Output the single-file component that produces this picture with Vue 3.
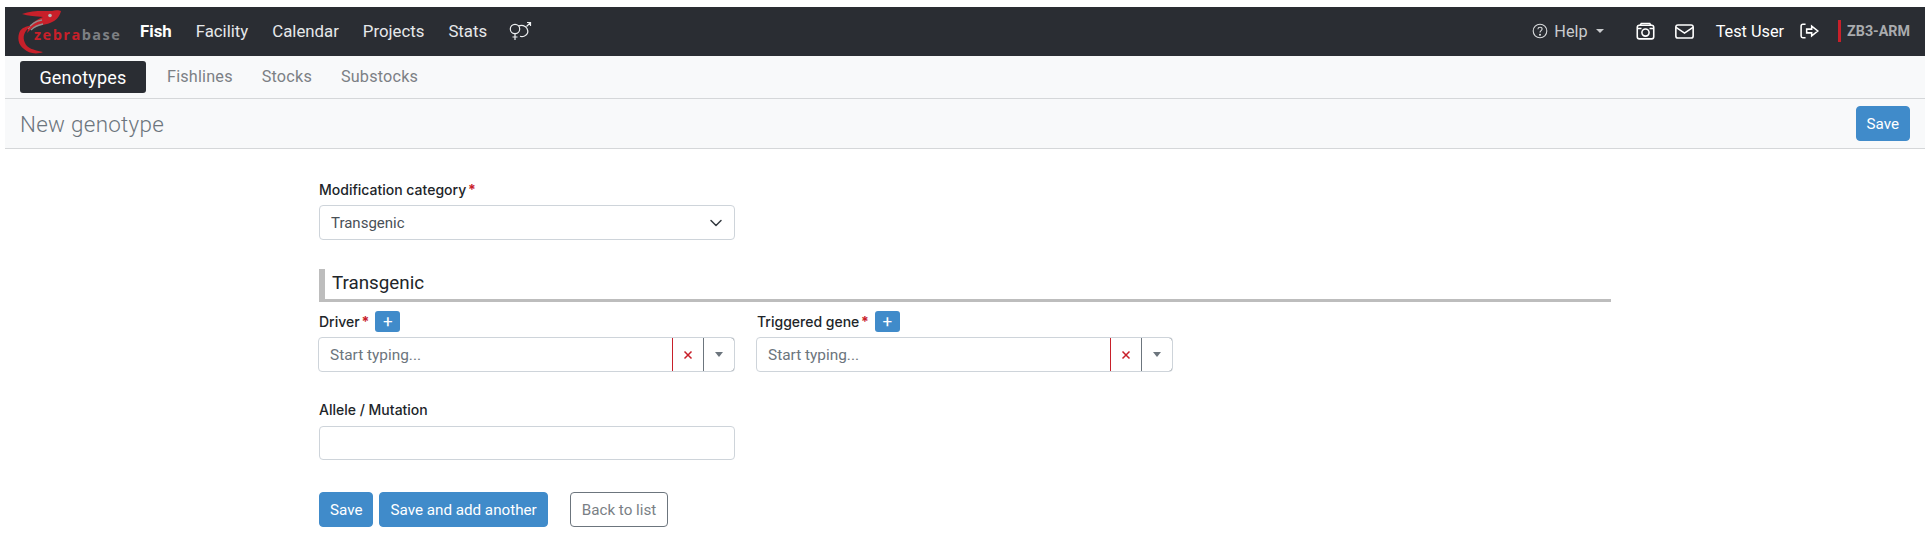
<script setup>
const navItems = ['Facility', 'Calendar', 'Projects', 'Stats']
const tabs = ['Fishlines', 'Stocks', 'Substocks']
const pickers = [
  { label: 'Driver' },
  { label: 'Triggered gene' }
]
</script>

<template>
  <div class="page">
    <header class="navbar">
      <div class="brand">
        <svg class="fish" viewBox="0 0 56 49" width="56" height="49">
          <path d="M8 7C18 3 30 4 38 4c3-1 7-1 9 0-1 5-5 10-11 12-5 2-13 2-18 5l-5 5c2-8 8-13 16-16C22 9 14 9 8 7Z" fill="#c8202a"/>
          <circle cx="36" cy="8.500" r="1.800" fill="#b9b9b9"/>
          <path d="M14 22c3-5 8-8 14-9M17 23c3-3 7-5 12-6" fill="none" stroke="#8f8f8f" stroke-width="1.300"/>
          <path d="M17 19c-7 5-9 11-6 17 2 5 8 7 18 9-7 3-15 1-19-3-6-4-7-12-4-18 2-3 6-5 11-5Z" fill="#c8202a"/>
        </svg>
        <span class="brand-text"><span class="zebra">zebra</span><span class="base">base</span></span>
      </div>
      <nav class="mainnav">
        <a class="nav-link active">Fish</a>
        <a v-for="item in navItems" :key="item" class="nav-link">{{ item }}</a>
        <svg class="gender" viewBox="6 6 23 20" width="23" height="20" fill="none" stroke="#eceef0" stroke-width="1.200">
          <circle cx="12" cy="14" r="4.700"/>
          <path d="M12 18.700V25M9.500 22h5"/>
          <path d="M15.500 11c3-1.500 7-.5 8.500 2.500s.5 6-2.500 7.500c-1.500.7-3 .8-4.500.3"/>
          <path d="M23.500 11.500L27 8M24 7.500h3.500V11"/>
        </svg>
      </nav>
      <div class="usernav">
        <span class="help">
          <svg viewBox="0 0 16 16" width="16" height="16" fill="none" stroke="#d8dadc" stroke-width="1.100">
            <circle cx="8" cy="8" r="6.800"/>
            <path d="M5.900 6.200C6 4.900 6.900 4.300 8 4.300c1.200 0 2.100.8 2.100 1.800 0 1.500-2.100 1.600-2.100 3.300"/>
            <circle cx="8" cy="11.700" r=".5" fill="#d8dadc"/>
          </svg>
          <span>Help</span>
          <i class="help-caret"></i>
        </span>
        <svg class="cam" viewBox="0 0 18 18" width="19" height="19" fill="none" stroke="#fff" stroke-width="1.500">
          <rect x="1.200" y="3" width="15.600" height="13" rx="2"/>
          <circle cx="9" cy="10" r="3.400"/>
          <path d="M1.200 6.200h4M12.800 6.200h4M4 3l1-1.600h8L14 3"/>
        </svg>
        <svg class="mail" viewBox="0 0 18 14" width="19" height="15" fill="none" stroke="#fff" stroke-width="1.500">
          <rect x=".8" y=".8" width="16.400" height="12.400" rx="2"/>
          <path d="M1 3l8 5.500L17 3"/>
        </svg>
        <span class="user">Test User</span>
        <svg class="logout" viewBox="0 0 18 14" width="20" height="16" fill="none" stroke="#fff" stroke-width="1.400">
          <path d="M5 1H2.500C1.600 1 1 1.600 1 2.500v9c0 .9.600 1.500 1.500 1.500H5"/>
          <path d="M6 5.300h4.500V2.600L16 7l-5.500 4.400V8.700H6z"/>
        </svg>
        <span class="server">ZB3-ARM</span>
      </div>
    </header>

    <div class="subnav">
      <a class="tab active">Genotypes</a>
      <a v-for="tab in tabs" :key="tab" class="tab">{{ tab }}</a>
    </div>

    <div class="titlebar">
      <h1>New genotype</h1>
      <button class="btn">Save</button>
    </div>

    <main class="form">
      <section class="half">
        <label class="lbl">Modification category <b>*</b></label>
        <div class="control select">
          <span>Transgenic</span>
          <svg viewBox="0 0 16 16" width="16" height="16" fill="none" stroke="#343a40" stroke-width="1.500" stroke-linecap="round" stroke-linejoin="round">
            <path d="M3 5.500l5 5 5-5"/>
          </svg>
        </div>
      </section>

      <h2 class="section">Transgenic</h2>

      <section class="pickers">
        <div v-for="p in pickers" :key="p.label" class="picker">
          <div class="lbl-row">
            <label class="lbl">{{ p.label }} <b>*</b></label>
            <button class="add">+</button>
          </div>
          <div class="combo">
            <span class="placeholder">Start typing...</span>
            <span class="clear">
              <svg viewBox="0 0 10 10" width="10" height="10" fill="none" stroke="#c8202a" stroke-width="1.500"><path d="M1.500 1.500l7 7M8.500 1.500l-7 7"/></svg>
            </span>
            <span class="drop"><i></i></span>
          </div>
        </div>
      </section>

      <section class="half allele">
        <label class="lbl">Allele / Mutation</label>
        <div class="control"></div>
      </section>

      <div class="actions">
        <button class="btn">Save</button>
        <button class="btn">Save and add another</button>
        <button class="btn outline">Back to list</button>
      </div>
    </main>
  </div>
</template>

<style>
html, body { margin: 0; background: #fff; }
</style>

<style scoped>
.page {
  padding: 7px 5px 0 5px;
  font-family: Inter, Roboto, "Liberation Sans", sans-serif;
  font-size: 14px;
  color: #212529;
  height: 543px;
  overflow: hidden;
}
.navbar {
  height: 49px;
  background: #2a2d33;
  display: flex;
  align-items: center;
  color: #fff;
}
.brand { position: relative; width: 126px; height: 49px; margin-left: 9px; flex: none; }
.fish { position: absolute; left: 0; top: 0; }
.brand-text {
  position: absolute; left: 20px; top: 18px;
  font-family: "Open Sans", sans-serif; font-weight: 700; font-size: 14.500px; letter-spacing: 1.500px; line-height: 20px;
}
.zebra { color: #c8202a; }
.base { color: #7d8084; }
.mainnav { display: flex; align-items: center; gap: 24px; font-family: Roboto, sans-serif; font-size: 16.800px; padding-bottom: 2px; }
.nav-link { color: #e6e8ea; }
.nav-link.active { color: #fff; font-weight: 700; }
.gender { margin-left: -2px; }
.usernav { margin-left: auto; display: flex; align-items: center; font-family: Roboto, sans-serif; font-size: 16.300px; padding-right: 15px; padding-bottom: 1px; }
.help { display: flex; align-items: center; gap: 6px; color: #c9cbce; }
.help-caret { margin-left: 2px; border: 4.500px solid transparent; border-top-color: #c9cbce; border-bottom: 0; }
.cam { margin-left: 32px; }
.mail { margin-left: 20px; }
.user { margin-left: 22px; }
.logout { margin-left: 16px; }
.server {
  margin-left: 18px; padding-left: 6px; border-left: 3px solid #c8202a;
  font-weight: 700; font-size: 14.300px; color: #a9abae; line-height: 22px;
}
.subnav {
  height: 42px;
  background: #f8f9fa;
  border-bottom: 1px solid #d5d7d9;
  display: flex;
  align-items: center;
  padding-left: 15px;
  font-family: Roboto, sans-serif;
  font-size: 16.200px;
}
.tab { color: #7c8085; letter-spacing: .2px; margin-right: 29px; padding-bottom: 1px; }
.tab.active {
  background: #2a2d33; color: #fff; border-radius: 3px; width: 126px; height: 32px; font-size: 18px; padding-bottom: 0;
  display: flex; align-items: center; justify-content: center; margin-right: 21px;
}
.titlebar {
  height: 49px;
  background: #f8f9fa;
  border-bottom: 1px solid #d5d7d9;
  display: flex;
  align-items: center;
  justify-content: space-between;
  padding: 0 15px;
}
.titlebar h1 { margin: 0; font-family: Roboto, sans-serif; font-weight: 300; font-size: 22.400px; color: #6c757d; letter-spacing: .3px; }
.btn {
  height: 35px; border: 1px solid #408bca; border-radius: 4px; background: #408bca; color: #fff;
  font-family: Roboto, sans-serif; font-size: 15.200px; padding: 0 10px;
}
.form { width: 1292px; margin: 33px 0 0 314px; }
.half { width: 416px; }
.lbl { font-size: 14px; font-weight: 500; color: #212529; display: block; line-height: 16px; }
.lbl b { color: #c8202a; font-weight: 700; margin-left: -2px; }
.control {
  box-sizing: border-box; height: 35px; margin-top: 7px; border: 1px solid #ced4da; border-radius: 4px;
  display: flex; align-items: center; justify-content: space-between; padding: 0 10px 0 11px;
  font-family: Roboto, sans-serif; font-size: 15px; color: #495057;
}
.section {
  margin: 29px 0 0; height: 33px; box-sizing: border-box; border-left: 6px solid #bdbdbd; border-bottom: 3px solid #bdbdbd;
  font-family: Roboto, sans-serif; font-weight: 400; font-size: 18.800px; color: #212529; line-height: 28px; padding-left: 7px;
}
.pickers { display: flex; gap: 21px; margin-top: 9px; margin-left: -1px; }
.picker { width: 417px; }
.lbl-row { display: flex; align-items: center; gap: 6px; height: 21px; margin-left: 1px; }
.add {
  width: 25px; height: 21px; border: 0; border-radius: 3px; background: #408bca; color: #fff; font-size: 17px; line-height: 19px; padding: 0;
  font-family: Roboto, sans-serif;
}
.combo {
  box-sizing: border-box; height: 35px; margin-top: 5px; border: 1px solid #ced4da; border-radius: 4px;
  display: flex; align-items: stretch; font-family: Roboto, sans-serif; font-size: 15.400px; overflow: hidden;
}
.placeholder { flex: 1; align-self: center; padding-left: 11px; color: #6c757d; }
.clear {
  box-sizing: border-box; width: 31px; border: 1px solid #c8202a; border-right: 0; display: flex; align-items: center; justify-content: center; margin: -1px 0;
}
.drop { box-sizing: border-box; width: 32px; border: 1px solid #6c757d; border-radius: 0 4px 4px 0; margin: -1px -1px -1px 0; display: flex; align-items: center; justify-content: center; }
.drop i { border: 4.500px solid transparent; border-top: 5px solid #6c757d; border-bottom: 0; }
.allele { margin-top: 30px; }
.allele .control { margin-top: 8px; height: 34px; }
.actions { display: flex; margin-top: 32px; gap: 6px; }
.outline { margin-left: 16px; background: #fff; border-color: #6c757d; color: #7a7f85; padding: 0 11px; }
</style>
